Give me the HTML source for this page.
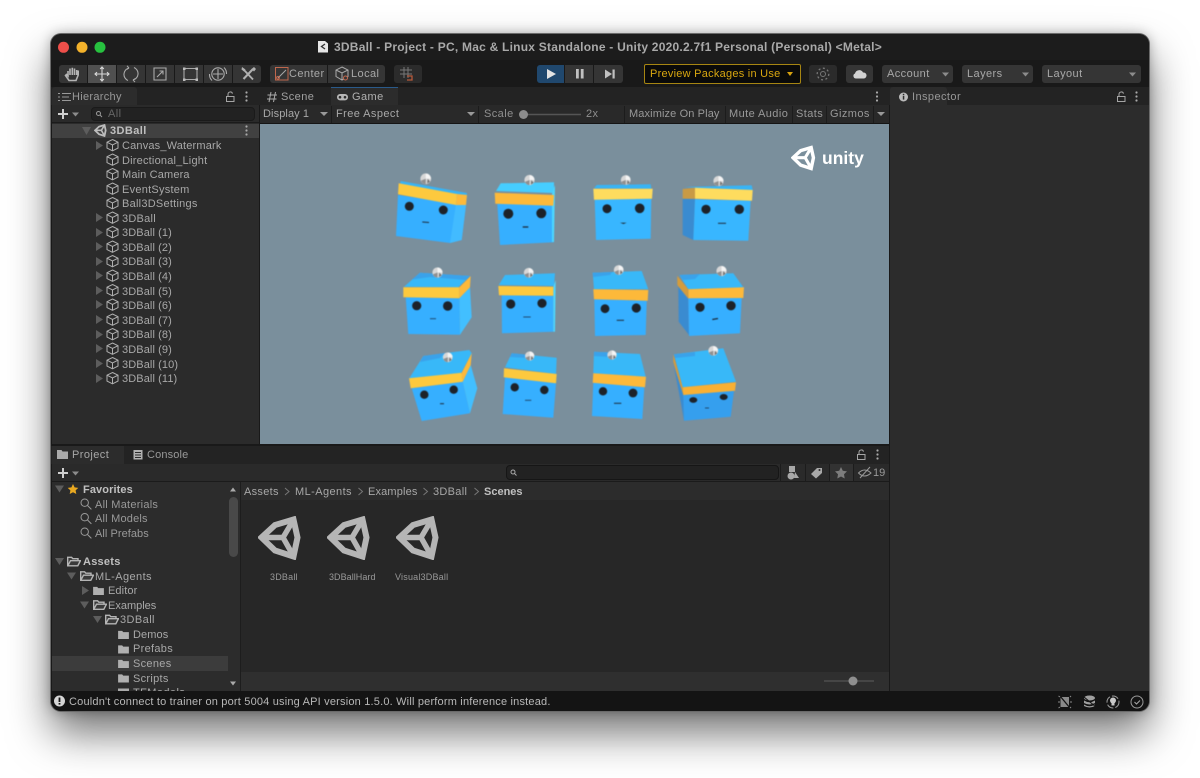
<!DOCTYPE html>
<html><head><meta charset="utf-8"><style>
html,body{margin:0;padding:0;background:#fff;width:1200px;height:778px;overflow:hidden}
#w{position:absolute;left:51px;top:34px;width:1098px;height:677px;border-radius:10px;background:#191919;box-shadow:0 0 0 1px #6a6a6a,0 22px 42px rgba(0,0,0,.55),0 0 12px rgba(0,0,0,.3)}
.b{position:absolute}
.t{position:absolute;white-space:nowrap;font:11px/14px "Liberation Sans",sans-serif;color:#a8a8a8;letter-spacing:.42px;margin-top:1px}
.s{font-weight:bold;color:#c0c0c0}
svg{position:absolute;left:0;top:0}
</style></head><body>
<div id="w"></div>
<!-- panels -->
<div class="b" style="left:51px;top:34px;width:1098px;height:26px;background:#1c1c1c;border-radius:10px 10px 0 0"></div>
<div class="b" style="left:51px;top:87px;width:1098px;height:18px;background:#232323"></div>
<div class="b" style="left:52px;top:87px;width:85px;height:18px;background:#2c2c2c;border-radius:3px 3px 0 0"></div>
<div class="b" style="left:52px;top:105px;width:207px;height:339px;background:#2b2b2b"></div>
<div class="b" style="left:52px;top:105px;width:207px;height:18px;background:#2a2a2a;border-bottom:1px solid #1b1b1b;box-sizing:border-box"></div>
<div class="b" style="left:91px;top:107px;width:164px;height:14px;background:#222;border-radius:4px;border:1px solid #1a1a1a;box-sizing:border-box"></div>
<div class="b" style="left:52px;top:124px;width:207px;height:13.500px;background:#414141"></div>
<div class="b" style="left:260px;top:105px;width:629px;height:19px;background:#292929;border-bottom:1px solid #151515;box-sizing:border-box"></div>
<div class="b" style="left:331px;top:87px;width:67px;height:18px;background:#2c2c2c;border-top:1px solid #2a5a8a;box-sizing:border-box"></div>
<div class="b" style="left:260px;top:124px;width:629px;height:320px;background:#7a8f9c"></div>
<div class="b" style="left:890px;top:87px;width:57px;height:18px;background:#2c2c2c;border-radius:3px 3px 0 0"></div>
<div class="b" style="left:890px;top:105px;width:259px;height:586px;background:#2c2c2c"></div>
<div class="b" style="left:51px;top:446px;width:838px;height:18px;background:#232323"></div>
<div class="b" style="left:52px;top:446px;width:72px;height:18px;background:#2c2c2c"></div>
<div class="b" style="left:52px;top:464px;width:837px;height:18px;background:#2a2a2a;border-bottom:1px solid #1b1b1b;box-sizing:border-box"></div>
<div class="b" style="left:506px;top:465px;width:273px;height:15px;background:#222;border-radius:4px;border:1px solid #161616;box-sizing:border-box"></div>
<div class="b" style="left:52px;top:482px;width:188px;height:209px;background:#2c2c2c"></div>
<div class="b" style="left:240px;top:482px;width:649px;height:209px;background:#272727;border-left:1px solid #1d1d1d;box-sizing:border-box"></div>
<div class="b" style="left:241px;top:482px;width:648px;height:18px;background:#2c2c2c"></div>
<div class="b" style="left:241px;top:672px;width:648px;height:19px;background:#2f2f2f"></div>
<div class="b" style="left:52px;top:656px;width:176px;height:15px;background:#3c3c3c"></div>
<div class="b" style="left:229px;top:497px;width:9px;height:60px;background:#494949;border-radius:5px"></div>
<div class="b" style="left:51px;top:691px;width:1098px;height:20px;background:#141414;border-radius:0 0 10px 10px"></div>
<!-- toolbar buttons -->
<div class="b" style="left:59px;top:65px;width:28px;height:18px;background:#353535;border-radius:3px 0 0 3px"></div>
<div class="b" style="left:88px;top:65px;width:28px;height:18px;background:#505050"></div>
<div class="b" style="left:117px;top:65px;width:28px;height:18px;background:#353535"></div>
<div class="b" style="left:146px;top:65px;width:28px;height:18px;background:#353535"></div>
<div class="b" style="left:175px;top:65px;width:28px;height:18px;background:#353535"></div>
<div class="b" style="left:204px;top:65px;width:28px;height:18px;background:#353535"></div>
<div class="b" style="left:233px;top:65px;width:28px;height:18px;background:#353535;border-radius:0 3px 3px 0"></div>
<div class="b" style="left:270px;top:65px;width:57px;height:18px;background:#353535;border-radius:3px 0 0 3px"></div>
<div class="b" style="left:328px;top:65px;width:57px;height:18px;background:#353535;border-radius:0 3px 3px 0"></div>
<div class="b" style="left:394px;top:65px;width:28px;height:18px;background:#2b2b2b;border-radius:3px"></div>
<div class="b" style="left:537px;top:65px;width:27px;height:18px;background:#20486e;border-radius:3px 0 0 3px"></div>
<div class="b" style="left:565px;top:65px;width:28px;height:18px;background:#353535"></div>
<div class="b" style="left:594px;top:65px;width:29px;height:18px;background:#353535;border-radius:0 3px 3px 0"></div>
<div class="b" style="left:644px;top:64px;width:157px;height:20px;background:#0a0a0a;border:1px solid #a68512;border-radius:2px;box-sizing:border-box"></div>
<div class="b" style="left:809px;top:65px;width:28px;height:18px;background:#2b2b2b;border-radius:3px"></div>
<div class="b" style="left:846px;top:65px;width:27px;height:18px;background:#353535;border-radius:3px"></div>
<div class="b" style="left:882px;top:65px;width:71px;height:18px;background:#353535;border-radius:3px"></div>
<div class="b" style="left:962px;top:65px;width:71px;height:18px;background:#353535;border-radius:3px"></div>
<div class="b" style="left:1042px;top:65px;width:99px;height:18px;background:#353535;border-radius:3px"></div>

<svg width="1200" height="778" viewBox="0 0 1200 778">
<defs>
<symbol id="cube" viewBox="0 0 13 13"><path d="M6.500 1L12 3.700V9.600L6.500 12.300L1 9.600V3.700ZM1 3.700L6.500 6.400L12 3.700M6.500 6.400V12.300" fill="none" stroke="#b0b0b0" stroke-width="1"/></symbol>
<symbol id="folder" viewBox="0 0 12 10"><path d="M0 1H4.500L5.700 2.300H12V10H0Z" fill="#b0b0b0"/></symbol>
<symbol id="ofolder" viewBox="0 0 14 10"><path d="M.7 9.300V.8H4.600L5.800 2.200H11V4.200H3.500L.8 9.300H10.800L13.400 4.200H3.800" fill="#3a3a3a" stroke="#b5b5b5" stroke-width="1.400"/></symbol>
<symbol id="mag" viewBox="0 0 12 12"><circle cx="4.700" cy="4.700" r="3.700" fill="none" stroke="#9a9a9a" stroke-width="1"/><path d="M7.500 7.500L11.400 11.400" stroke="#9a9a9a" stroke-width="1"/></symbol>
<symbol id="ulogo" viewBox="0 0 44 44"><path d="M3.500 21.500L17 9L35.500 3.500L39.500 21.500L35.500 40.500L17 34.500Z" fill="none" stroke="currentColor" stroke-width="6"/><path d="M3 21.500H25L36 3M25 21.500L36 41" fill="none" stroke="currentColor" stroke-width="5.400"/></symbol>
<symbol id="rt" viewBox="0 0 7 9"><path d="M0 0L7 4.500L0 9Z" fill="#5d5d5d"/></symbol>
<symbol id="dt" viewBox="0 0 9 7"><path d="M0 0H9L4.500 7Z" fill="#5d5d5d"/></symbol>
<symbol id="menu" viewBox="0 0 3 11"><circle cx="1.500" cy="1.500" r="1.100" fill="#aaa"/><circle cx="1.500" cy="5.500" r="1.100" fill="#aaa"/><circle cx="1.500" cy="9.500" r="1.100" fill="#aaa"/></symbol>
<symbol id="lock" viewBox="0 0 9 11"><path d="M.5 5.500H8V10.500H.5ZM2 5.500V3A2.300 2.300 0 0 1 6.500 2.600" fill="none" stroke="#a5a5a5" stroke-width="1"/></symbol>
<symbol id="ball" viewBox="0 0 12 12"><circle cx="6" cy="6" r="5.600" fill="#d7d7d7"/><path d="M6 .5A5.600 5.600 0 0 1 11.500 6L6 6Z" fill="#f5f5f5"/><path d="M1 8A5.600 5.600 0 0 0 6 11.500L6 6Z" fill="#8f8f8f"/><path d="M8 6L10.500 9L7.500 11Z" fill="#6f6f6f"/></symbol>
</defs>
<!-- traffic lights -->
<circle cx="63.500" cy="47.300" r="5.500" fill="#ee4f4a"/><circle cx="82" cy="47.300" r="5.500" fill="#f4b22b"/><circle cx="100" cy="47.300" r="5.500" fill="#27c13f"/>
<path d="M318 41H325L328 43.500V52.500H318Z" fill="#e6e6e6"/><path d="M325 44L321.500 46.500L325 49" fill="none" stroke="#333" stroke-width="1.300"/>
<!-- tools -->
<path d="M68 71V76L66.500 74.500L65.500 75.500L69 80.500H76L78.200 75V70.500M70 75V68.500M72.300 75V67.800M74.500 75V68.500M76.700 75V70" fill="none" stroke="#b5b5b5" stroke-width="1.600"/>
<path d="M102 67V81M95 74H109M100.200 69L102 67L103.800 69M100.200 79L102 81L103.800 79M97 72.200L95 74L97 75.800M107 72.200L109 74L107 75.800" fill="none" stroke="#d8d8d8" stroke-width="1.100"/>
<path d="M128 80.500A6.600 6.600 0 0 1 129 68M134 67.500A6.600 6.600 0 0 1 133 80" fill="none" stroke="#aaa" stroke-width="1.100"/><path d="M129 68L127 65.800M129 68L126.700 69.500M133 80L135 82M133 80L135.300 78.500" stroke="#aaa" stroke-width="1"/>
<path d="M154 68H166V80H154ZM157 77L163 71M159.500 71H163V74.500" fill="none" stroke="#aaa" stroke-width="1.100"/>
<path d="M185 68.500H196M185 79.500H196M184 70V78.500M197 70V78.500" stroke="#aaa" stroke-width="1.100"/><rect x="183" y="67.500" width="2.500" height="2.500" fill="#bbb"/><rect x="195.500" y="67.500" width="2.500" height="2.500" fill="#bbb"/><rect x="183" y="78.500" width="2.500" height="2.500" fill="#bbb"/><rect x="195.500" y="78.500" width="2.500" height="2.500" fill="#bbb"/>
<circle cx="218" cy="74" r="6.200" fill="none" stroke="#aaa" stroke-width="1.100"/><path d="M218 69V79M213 74H223M209.500 74A8.500 8.500 0 0 0 212 80.500M226.500 74A8.500 8.500 0 0 0 224 67.500" fill="none" stroke="#aaa" stroke-width="1.100"/>
<path d="M244 70L253 79.500" stroke="#b0b0b0" stroke-width="1.900"/><path d="M252.500 69.500L243.500 79" stroke="#b0b0b0" stroke-width="2.100"/><path d="M254 67L256 69L254 71.500L251.500 69Z" fill="#b0b0b0"/><path d="M242 67L245.500 69.500L244 71.500L241.500 69.500Z" fill="#b0b0b0"/>
<rect x="275.500" y="67.500" width="12.500" height="12.500" fill="none" stroke="#c0674d" stroke-width="1"/><path d="M278 78L286 70" stroke="#aaa"/><circle cx="278" cy="77.800" r="1.400" fill="none" stroke="#c0674d"/>
<path d="M342 67L348 70V76.500L342 80L336 76.500V70ZM336 70L342 73L348 70M342 73V80" fill="none" stroke="#aaa"/><circle cx="345.500" cy="78" r="2" fill="#353535" stroke="#c0674d"/>
<path d="M404 67V78M408 67V78M400 70H412M400 74H412" stroke="#777" fill="none"/><path d="M407 76H412V80H407" stroke="#b6593b" fill="none" stroke-width="1.300"/>
<path d="M547 69L556 74L547 79Z" fill="#e4e4e4"/>
<rect x="576" y="69" width="2.800" height="9.500" fill="#c0c0c0"/><rect x="580.800" y="69" width="2.800" height="9.500" fill="#c0c0c0"/>
<path d="M605 69.500L612 74L605 78.500Z" fill="#c0c0c0"/><rect x="612.500" y="69.500" width="2.200" height="9" fill="#c0c0c0"/>
<path d="M787 72H793L790 76Z" fill="#d7a20f"/>
<circle cx="823" cy="74" r="2.500" fill="none" stroke="#777"/><circle cx="823" cy="74" r="5.800" fill="none" stroke="#777" stroke-width="1.300" stroke-dasharray="2 2.500"/>
<path d="M856 78.500A2.600 2.600 0 0 1 855 73.500A4.300 4.300 0 0 1 863 72.500A3 3 0 0 1 864 78.500Z" fill="#d2d2d2"/>
<path d="M942 72.500H949L945.500 76.500Z" fill="#8c8c8c"/><path d="M1022 72.500H1029L1025.500 76.500Z" fill="#8c8c8c"/><path d="M1129 72.500H1136L1132.500 76.500Z" fill="#8c8c8c"/>
<!-- tab icons -->
<path d="M58 93.500H60M62 93.500H71M58 97H60M62 97H69M58 100.500H60M62 100.500H71" stroke="#999"/>
<use href="#lock" x="226" y="91" width="9" height="11"/><use href="#menu" x="245" y="91" width="3" height="11"/>
<path d="M271 92L269 102M275.500 92L273.500 102M267.500 95H277M267 99H276.500" stroke="#aaa" fill="none"/>
<rect x="337" y="94" width="11" height="6.400" rx="3.100" fill="#b7b7b7"/><circle cx="340" cy="97.200" r="1.300" fill="#2c2c2c"/><circle cx="345" cy="97.200" r="1.300" fill="#2c2c2c"/>
<use href="#menu" x="875.500" y="91" width="3" height="11"/>
<circle cx="903.500" cy="97" r="4.500" fill="#bbb"/><rect x="902.800" y="95.800" width="1.500" height="3.800" fill="#2c2c2c"/><rect x="902.800" y="93.800" width="1.500" height="1.300" fill="#2c2c2c"/>
<use href="#lock" x="1117" y="91" width="9" height="11"/><use href="#menu" x="1135" y="91" width="3" height="11"/>
<!-- hierarchy toolbar -->
<path d="M63 109V119M58 114H68" stroke="#cfcfcf" stroke-width="2"/><path d="M72 112.500H79L75.500 116.500Z" fill="#8c8c8c"/>
<circle cx="98.500" cy="113.500" r="2" fill="none" stroke="#999"/><path d="M100 115L102 117" stroke="#999"/>
<path d="M82 127H91L86.500 135Z" fill="#5d5d5d"/>
<use href="#ulogo" x="94" y="124" width="13" height="13" style="color:#bdbdbd"/>
<use href="#menu" x="245" y="125" width="3" height="11"/>
<use href="#rt" x="96" y="141" width="7" height="9"/><use href="#cube" x="106" y="138.500" width="13" height="13"/>
<use href="#cube" x="106" y="153" width="13" height="13"/><use href="#cube" x="106" y="167.500" width="13" height="13"/><use href="#cube" x="106" y="182" width="13" height="13"/><use href="#cube" x="106" y="196.500" width="13" height="13"/>
<use href="#rt" x="96" y="213" width="7" height="9"/><use href="#cube" x="106" y="211" width="13" height="13"/>
<use href="#rt" x="96" y="228" width="7" height="9"/><use href="#cube" x="106" y="225.500" width="13" height="13"/>
<use href="#rt" x="96" y="242" width="7" height="9"/><use href="#cube" x="106" y="240" width="13" height="13"/>
<use href="#rt" x="96" y="257" width="7" height="9"/><use href="#cube" x="106" y="254.500" width="13" height="13"/>
<use href="#rt" x="96" y="271" width="7" height="9"/><use href="#cube" x="106" y="269" width="13" height="13"/>
<use href="#rt" x="96" y="286" width="7" height="9"/><use href="#cube" x="106" y="283.500" width="13" height="13"/>
<use href="#rt" x="96" y="300" width="7" height="9"/><use href="#cube" x="106" y="298" width="13" height="13"/>
<use href="#rt" x="96" y="315" width="7" height="9"/><use href="#cube" x="106" y="313" width="13" height="13"/>
<use href="#rt" x="96" y="330" width="7" height="9"/><use href="#cube" x="106" y="327.500" width="13" height="13"/>
<use href="#rt" x="96" y="344" width="7" height="9"/><use href="#cube" x="106" y="342" width="13" height="13"/>
<use href="#rt" x="96" y="359" width="7" height="9"/><use href="#cube" x="106" y="356.500" width="13" height="13"/>
<use href="#rt" x="96" y="374" width="7" height="9"/><use href="#cube" x="106" y="371.500" width="13" height="13"/>
<!-- game toolbar -->
<path d="M320 112H328L324 116Z" fill="#999"/><path d="M467 112H475L471 116Z" fill="#999"/><path d="M877 112H885L881 116Z" fill="#999"/>
<path d="M331.500 106V123M478.500 106V123M624.500 106V123M725.500 106V123M792.500 106V123M826.500 106V123M873.500 106V123" stroke="#1c1c1c"/>
<path d="M523 114.500H581" stroke="#555" stroke-width="1.500"/><circle cx="523.500" cy="114.500" r="4.500" fill="#8c8c8c"/>
<!-- unity logo game -->
<use href="#ulogo" x="791" y="145" width="25" height="26" style="color:#fff"/>
<!-- cubes -->
<g style="filter:blur(.4px)">
<g><path d="M400.700 181L467 193L466 205L398 194Z" fill="#38b4f5"/><path d="M398 195L466 205L461.700 240L450 243L396 236Z" fill="#36afff"/><path d="M456 204L466 205L461.700 240L450 243Z" fill="#42bbff"/><path d="M398.700 183.300L457 194L456 205L398 194.300Z" fill="#fdc93e"/><path d="M457 194L467 195L466 205L456 205Z" fill="#fdb93a"/><circle cx="409.300" cy="206.300" r="4.500" fill="#1d2229"/><circle cx="443.300" cy="210" r="4.500" fill="#1d2229"/><path d="M422.300 222L429 222.500" stroke="#1d2a3a"/><use href="#ball" x="420" y="173" width="11.500" height="11.500"/></g>
<g><path d="M496 191L500.700 183.300L554 182.300L554 193Z" fill="#46cdff"/><path d="M497.300 203.700L553.300 205L554 242.300L500 245Z" fill="#36afff"/><path d="M552 194L555 185L554 242H552Z" fill="#4dd6ff"/><path d="M494.700 192.700L554 195L553.300 205.700L495.300 203.700Z" fill="#fdb93a"/><circle cx="508.300" cy="213.700" r="5" fill="#1d2229"/><circle cx="541.300" cy="213.300" r="5" fill="#1d2229"/><path d="M522.700 227L528.300 227" stroke="#1d2a3a" stroke-width="1.300"/><use href="#ball" x="524" y="174.500" width="11" height="11"/></g>
<g><path d="M594 188.300L596.700 185L650.700 184.300L651.300 188.700Z" fill="#38b4f5"/><path d="M594.700 199.700L651.300 198.700L650.700 238.700L596 240Z" fill="#38b6ff"/><path d="M593.300 188.700L652.700 188.700L652 198.700L594 199.700Z" fill="#fedc5e"/><circle cx="607" cy="208.700" r="4.500" fill="#1d2229"/><circle cx="639.700" cy="208.300" r="4.800" fill="#1d2229"/><path d="M620 222.700H626.700L623.500 224Z" fill="#1d2229"/><use href="#ball" x="620.500" y="174.500" width="10.500" height="11"/></g>
<g><path d="M684 187L751.700 185.300L752.700 190L695 187.700Z" fill="#38b4f5"/><path d="M682.700 198.700L695 199.300L693.300 240L682.700 235Z" fill="#3a8bd0"/><path d="M695 199.300L750.700 200.700L748.300 240.700L693.300 240Z" fill="#38b6ff"/><path d="M682.700 189L695 187.700V198.700H682.700Z" fill="#c99a45"/><path d="M695 187.700L752.700 190L752 200.700L695 198.700Z" fill="#fedc5e"/><circle cx="706" cy="209.300" r="4.600" fill="#1d2229"/><circle cx="739.300" cy="209.300" r="4.700" fill="#1d2229"/><path d="M718 223.300H726" stroke="#1d2a3a"/><use href="#ball" x="713" y="175.500" width="11" height="11"/></g>
<g><path d="M404 286.700L420 272.700L470 276L458.300 287.300Z" fill="#38b8f8"/><path d="M412 279.500L420 272.700L470 276L466 280L430 277Z" fill="#3aa2ea"/><path d="M405.700 297.300L459.300 298.300L460 334.700L408.300 334Z" fill="#36afff"/><path d="M459.300 298.300L470 287.300L471.700 317.300L460 334.700Z" fill="#42bfff"/><path d="M403.300 287.300H459.300V298.300L403.300 297.300Z" fill="#fdc93e"/><path d="M459.300 287.300L470.700 276L470 287.300L459.300 298.300Z" fill="#fdb93a"/><circle cx="416.700" cy="305.700" r="4.600" fill="#1d2229"/><circle cx="447.700" cy="306" r="4.700" fill="#1d2229"/><path d="M430 318.700H436" stroke="#1f4a70"/><use href="#ball" x="432" y="267" width="11" height="11"/></g>
<g><path d="M498.700 285L505 275L555 273.300L554 286Z" fill="#38b8f8"/><path d="M501.700 295.300L553.300 296L553.300 331.700L502 333.300Z" fill="#36afff"/><path d="M553.300 286.700L555.700 280L555 331.700H553.300Z" fill="#4dd6ff"/><path d="M498.300 286L553.300 286.700V295.700L499 295.300Z" fill="#fdc93e"/><circle cx="510.700" cy="304" r="4.600" fill="#1d2229"/><circle cx="542" cy="303.300" r="4.600" fill="#1d2229"/><path d="M523.300 317H530.700" stroke="#1f4a70"/><use href="#ball" x="523.500" y="267.500" width="10.500" height="10.500"/></g>
<g><path d="M592.700 272.700L641.700 271L648.300 289.300L594 289.300Z" fill="#38b8f8"/><path d="M592.700 272.700L612 272L610 275L593 277Z" fill="#3aa2ea"/><path d="M594.300 299.300L646.700 300.700L645.700 335L595 336Z" fill="#36afff"/><path d="M593.300 289.300L648.300 290L647.700 300.700L594 299.300Z" fill="#fdb93a"/><circle cx="605" cy="308.700" r="4.400" fill="#1d2229"/><circle cx="636.300" cy="308" r="4.600" fill="#1d2229"/><path d="M616.700 320.300H624" stroke="#1d2a3a"/><use href="#ball" x="613.500" y="264.500" width="10.500" height="11"/></g>
<g><path d="M679.300 275L733.300 273.300L743.300 287.300L688.300 289.300Z" fill="#38b8f8"/><path d="M679.300 275L700 274L695 279L683 280Z" fill="#3aa2ea"/><path d="M678.300 286.700L688.300 299.300L689 335L678.700 321.700Z" fill="#3a8bd0"/><path d="M688.300 298.300L741.700 297.300L740 333.300L689 336Z" fill="#36afff"/><path d="M688.300 289.300L744 287.300L743.300 298L688.300 298.300Z" fill="#fdb93a"/><path d="M677.300 275.700L688.300 289.300V298.300L677.300 285Z" fill="#d49c3c"/><circle cx="700" cy="307.300" r="4.600" fill="#1d2229"/><circle cx="731" cy="305.700" r="4.700" fill="#1d2229"/><path d="M712.300 319.500L718 318.500" stroke="#1d2a3a" stroke-width="1.200"/><use href="#ball" x="716" y="265.500" width="11" height="11"/></g>
<g><path d="M409.300 378.300L423.300 356L469.300 350L471.700 353.300L461 373.300Z" fill="#38b8f8"/><path d="M423.300 356L445 353L440 358L420 362Z" fill="#3aa2ea"/><path d="M411.700 388.300L462.700 381.700L470 413.300L421.700 421Z" fill="#36afff"/><path d="M462.700 381.700L470.700 365L477.300 388.300L470 413.300Z" fill="#42bfff"/><path d="M409 378.300L461.700 372.700L462.700 381.700L410.700 388.300Z" fill="#fdc93e"/><path d="M461.700 372.700L471.700 353.300L470.700 365L462.700 381.700Z" fill="#fdb93a"/><circle cx="424.300" cy="394.700" r="4.200" fill="#1d2229"/><circle cx="453.700" cy="389.700" r="4.200" fill="#1d2229"/><path d="M440 403.700H444" stroke="#1d2a3a"/><use href="#ball" x="442.500" y="352" width="10.500" height="10.500"/></g>
<g><path d="M505 367.300L511.700 353.300L556.700 357.700L556 374Z" fill="#38b8f8"/><path d="M511.700 353.300L530 355L528 358L510 357Z" fill="#3aa2ea"/><path d="M505 377.300L556 383.300L553.300 417.700L502.700 414Z" fill="#36afff"/><path d="M504 368.300L556.700 374L556 383.300L503.700 377.300Z" fill="#fdc93e"/><circle cx="514.700" cy="387.300" r="4.200" fill="#1d2229"/><circle cx="544.300" cy="390" r="4.200" fill="#1d2229"/><path d="M525 400.300H531.300" stroke="#1f4a70"/><use href="#ball" x="524.700" y="351" width="10" height="10"/></g>
<g><path d="M594 351.700L640 354L645.700 376.700L593.300 373.300Z" fill="#38b8f8"/><path d="M594 351.700L612 352.600L610 357L594 356Z" fill="#3aa2ea"/><path d="M593.300 382.700L644.300 387.300L642.300 419L592 416Z" fill="#36afff"/><path d="M593.300 373.300L646 376.700L645 387.300L592.700 382.700Z" fill="#fdb93a"/><circle cx="603" cy="391.300" r="4.200" fill="#1d2229"/><circle cx="633" cy="393" r="4.400" fill="#1d2229"/><path d="M614 403.300H621.300" stroke="#1d2a3a"/><use href="#ball" x="607" y="350" width="10" height="10"/></g>
<g><path d="M674 354.300L723.300 348.300L736 381.700L682.700 387.300Z" fill="#38b8f8"/><path d="M674 354.300L695 352L695 356L675 358Z" fill="#3aa2ea"/><path d="M674 366.700L683.300 395L684 420.700L680 398Z" fill="#3a8bd0"/><path d="M683.300 395L734 390.700L730.700 416.700L684 420.700Z" fill="#359fee"/><path d="M682.700 387.300L736 382.300L735 390.700L683.300 395Z" fill="#f8b034"/><path d="M673.300 354.300L682.700 387.300L683.300 395L673.300 361.700Z" fill="#d49c3c"/><ellipse cx="693.300" cy="400" rx="4" ry="2.900" fill="#1d2229"/><ellipse cx="723.700" cy="397" rx="4" ry="3" fill="#1d2229"/><path d="M705 408H709" stroke="#1f4a70"/><use href="#ball" x="708" y="345.500" width="10.500" height="10.500"/></g>
</g>
<!-- project tabs -->
<path d="M57 450H61.500L62.500 451.500H68V459H57Z" fill="#aaa"/>
<path d="M133.500 450H142.500V459.500H133.500Z" fill="#b0b0b0"/><path d="M135 452.500H141M135 455H141M135 457.500H141" stroke="#2a2a2a"/>
<use href="#lock" x="857" y="449" width="9" height="11"/><use href="#menu" x="876" y="449" width="3" height="11"/>
<path d="M63 468V478M58 473H68" stroke="#cfcfcf" stroke-width="2"/><path d="M72 471.500H79L75.500 475.500Z" fill="#8c8c8c"/>
<circle cx="513" cy="472" r="2" fill="none" stroke="#aaa"/><path d="M514.500 473.500L516.500 475.500" stroke="#aaa"/>
<path d="M780.500 464V482M805.500 464V482M829.500 464V482M853.500 464V482" stroke="#1c1c1c"/>
<rect x="830" y="464" width="23" height="17" fill="#323232"/>
<rect x="789" y="466" width="6" height="6" fill="#a8a8a8"/><circle cx="791" cy="476" r="3.500" fill="#a8a8a8"/><path d="M795 472L799 478H794Z" fill="#a8a8a8"/>
<path d="M811 474L817 468H822V473L816 478.500Z" fill="#a8a8a8"/><circle cx="819.500" cy="470" r="1" fill="#2a2a2a"/>
<path d="M841 467L842.800 470.800L847 471.400L844 474.300L844.700 478.500L841 476.500L837.300 478.500L838 474.300L835 471.400L839.200 470.800Z" fill="#7d7d7d"/>
<path d="M858.500 473Q864.500 467 871 473Q864.500 479 858.500 473ZM860 478L870 467" fill="none" stroke="#999"/>
<!-- project tree -->
<use href="#dt" x="55" y="485.500" width="9" height="7"/>
<path d="M73 484L74.600 487.400L78.300 487.900L75.600 490.400L76.300 494L73 492.200L69.700 494L70.400 490.400L67.700 487.900L71.400 487.400Z" fill="#e9a921"/>
<use href="#mag" x="80" y="498" width="12" height="12"/><use href="#mag" x="80" y="512.500" width="12" height="12"/><use href="#mag" x="80" y="527" width="12" height="12"/>
<use href="#dt" x="55" y="558" width="9" height="7"/><use href="#ofolder" x="67" y="556.500" width="14" height="10"/>
<use href="#dt" x="67" y="572.500" width="9" height="7"/><use href="#ofolder" x="80" y="571" width="14" height="10"/>
<use href="#rt" x="82" y="586" width="7" height="9"/><use href="#folder" x="93" y="586" width="11" height="9"/>
<use href="#dt" x="80" y="601.500" width="9" height="7"/><use href="#ofolder" x="93" y="600" width="14" height="10"/>
<use href="#dt" x="93" y="616" width="9" height="7"/><use href="#ofolder" x="105" y="614.500" width="14" height="10"/>
<use href="#folder" x="118" y="630" width="11" height="9"/><use href="#folder" x="118" y="644.500" width="11" height="9"/><use href="#folder" x="118" y="659" width="11" height="9"/><use href="#folder" x="118" y="673.500" width="11" height="9"/>
<rect x="118" y="688.500" width="11" height="2.500" fill="#aaa"/>
<path d="M230 491.500H236L233 487.500Z" fill="#aaa"/><path d="M230 681.500H236L233 685.500Z" fill="#aaa"/>
<!-- assets -->
<use href="#ulogo" x="258" y="516" width="44" height="44" style="color:#b5b5b5"/>
<use href="#ulogo" x="327" y="516" width="44" height="44" style="color:#b5b5b5"/>
<use href="#ulogo" x="396" y="516" width="44" height="44" style="color:#b5b5b5"/>
<path d="M285 488L289 491.500L285 495M358.500 488L362.500 491.500L358.500 495M423.500 488L427.500 491.500L423.500 495M474.500 488L478.500 491.500L474.500 495" fill="none" stroke="#777"/>
<path d="M824 681H874" stroke="#4f4f4f" stroke-width="1.500"/><circle cx="853" cy="681" r="4.500" fill="#8f8f8f"/>
<!-- status -->
<circle cx="59.500" cy="701" r="5.500" fill="#d6d6d6"/><rect x="58.600" y="697.500" width="1.800" height="4.500" fill="#141414"/><rect x="58.600" y="703" width="1.800" height="1.600" fill="#141414"/>
<path d="M1060.500 697H1069V707H1060.500Z" fill="#8a8a8a"/><path d="M1060 696L1070 708" stroke="#141414" stroke-width="1.300"/><path d="M1060 697L1058.500 696M1070 697L1071 696M1060 702H1058M1070 702H1072M1060 707L1058.500 708M1070 707L1071 708" stroke="#8a8a8a"/>
<ellipse cx="1089.500" cy="698" rx="5.500" ry="2.500" fill="#a0a0a0"/><path d="M1084 700.500Q1089.500 704 1095 700.500V703Q1089.500 706 1084 703ZM1084 704.500Q1089.500 708 1095 704.500V706Q1089.500 709 1084 706Z" fill="#a0a0a0"/><path d="M1084 697L1096 707" stroke="#141414" stroke-width="1.100"/>
<circle cx="1113" cy="702" r="6" fill="none" stroke="#9a9a9a" stroke-dasharray="7 2"/><circle cx="1113" cy="700.500" r="3" fill="#c8c8c8"/><rect x="1111.500" y="703" width="3" height="2.500" fill="#c8c8c8"/>
<circle cx="1137" cy="702" r="6" fill="none" stroke="#9a9a9a"/><path d="M1134.500 702L1136.500 704L1140 700.500" fill="none" stroke="#aaa"/>
</svg>

<!-- text -->
<div class="t s" style="left:334px;top:39px;font-size:12px;color:#a9a9a9;letter-spacing:.23px">3DBall - Project - PC, Mac &amp; Linux Standalone - Unity 2020.2.7f1 Personal (Personal) &lt;Metal&gt;</div>
<div class="t" style="left:289px;top:66px">Center</div>
<div class="t" style="left:351px;top:66px">Local</div>
<div class="t" style="left:650px;top:66px;color:#d8a610;letter-spacing:.25px">Preview Packages in Use</div>
<div class="t" style="left:887px;top:66px">Account</div>
<div class="t" style="left:967px;top:66px">Layers</div>
<div class="t" style="left:1047px;top:66px">Layout</div>
<div class="t" style="left:72px;top:89px;color:#989898;letter-spacing:.3px">Hierarchy</div>
<div class="t" style="left:281px;top:89px;color:#a0a0a0">Scene</div>
<div class="t" style="left:352px;top:89px;color:#b0b0b0">Game</div>
<div class="t" style="left:912px;top:89px;color:#989898">Inspector</div>
<div class="t" style="left:108px;top:106px;color:#666">All</div>
<div class="t" style="left:263px;top:106px;letter-spacing:.1px">Display 1</div>
<div class="t" style="left:336px;top:106px">Free Aspect</div>
<div class="t" style="left:484px;top:106px;color:#909090">Scale</div>
<div class="t" style="left:586px;top:106px;color:#909090">2x</div>
<div class="t" style="left:629px;top:106px;color:#999;letter-spacing:.12px">Maximize On Play</div>
<div class="t" style="left:729px;top:106px;color:#999">Mute Audio</div>
<div class="t" style="left:796px;top:106px;color:#999">Stats</div>
<div class="t" style="left:830px;top:106px;color:#999">Gizmos</div>
<div class="t s" style="left:110px;top:123px">3DBall</div>
<div class="t" style="left:122px;top:138px;letter-spacing:.17px">Canvas_Watermark</div>
<div class="t" style="left:122px;top:152.500px;letter-spacing:.2px">Directional_Light</div>
<div class="t" style="left:122px;top:167px;letter-spacing:.15px">Main Camera</div>
<div class="t" style="left:122px;top:181.500px;letter-spacing:.25px">EventSystem</div>
<div class="t" style="left:122px;top:196px;letter-spacing:.25px">Ball3DSettings</div>
<div class="t" style="left:122px;top:210.500px;letter-spacing:.25px">3DBall</div>
<div class="t" style="left:122px;top:225px;letter-spacing:.1px">3DBall (1)</div>
<div class="t" style="left:122px;top:239.500px;letter-spacing:.1px">3DBall (2)</div>
<div class="t" style="left:122px;top:254px;letter-spacing:.1px">3DBall (3)</div>
<div class="t" style="left:122px;top:269px;letter-spacing:.1px">3DBall (4)</div>
<div class="t" style="left:122px;top:283.500px;letter-spacing:.1px">3DBall (5)</div>
<div class="t" style="left:122px;top:298px;letter-spacing:.1px">3DBall (6)</div>
<div class="t" style="left:122px;top:312.500px;letter-spacing:.1px">3DBall (7)</div>
<div class="t" style="left:122px;top:327px;letter-spacing:.1px">3DBall (8)</div>
<div class="t" style="left:122px;top:342px;letter-spacing:.1px">3DBall (9)</div>
<div class="t" style="left:122px;top:356.500px;letter-spacing:.1px">3DBall (10)</div>
<div class="t" style="left:122px;top:371px;letter-spacing:.1px">3DBall (11)</div>
<div class="t" style="left:822px;top:145px;font:bold 17.500px/24px 'Liberation Sans',sans-serif;color:#fff;letter-spacing:0">unity</div>
<div class="t" style="left:72px;top:447px">Project</div>
<div class="t" style="left:147px;top:447px;color:#999;letter-spacing:.15px">Console</div>
<div class="t" style="left:873px;top:465px;color:#999;letter-spacing:0">19</div>
<div class="t s" style="left:83px;top:482px;letter-spacing:.1px">Favorites</div>
<div class="t" style="left:95px;top:496.500px;color:#999;letter-spacing:.25px">All Materials</div>
<div class="t" style="left:95px;top:511px;color:#999;letter-spacing:.2px">All Models</div>
<div class="t" style="left:95px;top:525.500px;color:#999;letter-spacing:.05px">All Prefabs</div>
<div class="t s" style="left:83px;top:554px;letter-spacing:.25px">Assets</div>
<div class="t" style="left:95px;top:568.500px">ML-Agents</div>
<div class="t" style="left:108px;top:583px;letter-spacing:.1px">Editor</div>
<div class="t" style="left:108px;top:597.500px;letter-spacing:0">Examples</div>
<div class="t" style="left:120px;top:612px">3DBall</div>
<div class="t" style="left:133px;top:626.500px;letter-spacing:.1px">Demos</div>
<div class="t" style="left:133px;top:641px;letter-spacing:.3px">Prefabs</div>
<div class="t" style="left:133px;top:655.500px;letter-spacing:.3px">Scenes</div>
<div class="t" style="left:133px;top:670.500px;letter-spacing:.3px">Scripts</div>
<div class="b" style="left:133px;top:686px;width:60px;height:5px;overflow:hidden"><div class="t" style="left:0;top:-1px">TFModels</div></div>
<div class="t" style="left:244px;top:484px;letter-spacing:.3px">Assets</div>
<div class="t" style="left:295px;top:484px">ML-Agents</div>
<div class="t" style="left:368px;top:484px;letter-spacing:.15px">Examples</div>
<div class="t" style="left:433px;top:484px;letter-spacing:.3px">3DBall</div>
<div class="t s" style="left:484px;top:484px;letter-spacing:0">Scenes</div>
<div class="t" style="left:270px;top:569px;font-size:9px;letter-spacing:.2px;color:#999">3DBall</div>
<div class="t" style="left:329px;top:569px;font-size:9px;letter-spacing:.05px;color:#999">3DBallHard</div>
<div class="t" style="left:395px;top:569px;font-size:9px;letter-spacing:.2px;color:#999">Visual3DBall</div>
<div class="t" style="left:69px;top:694px;color:#b8b8b8;letter-spacing:.19px">Couldn't connect to trainer on port 5004 using API version 1.5.0. Will perform inference instead.</div>
</body></html>
